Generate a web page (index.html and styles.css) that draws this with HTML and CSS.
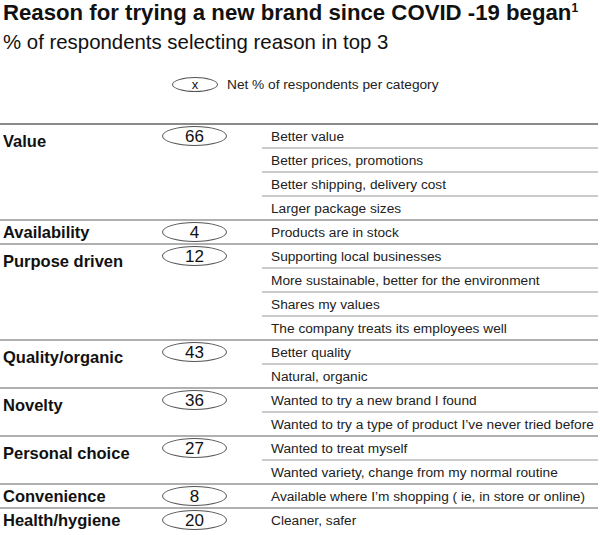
FILE: index.html
```html
<!DOCTYPE html>
<html>
<head>
<meta charset="utf-8">
<link rel="stylesheet" href="styles.css">
</head>
<body>
<div class="page">
  <h1 class="title">Reason for trying a new brand since COVID -19 began<span class="fn">1</span></h1>
  <p class="subtitle">% of respondents selecting reason in top 3</p>
  <div class="legend"><span class="oval oval-sm">x</span><span>Net % of respondents per category</span></div>
  <div class="table">
    <div class="group">
      <div class="cat">Value</div>
      <div class="num"><span class="oval">66</span></div>
      <ul class="items">
        <li>Better value</li>
        <li>Better prices, promotions</li>
        <li>Better shipping, delivery cost</li>
        <li>Larger package sizes</li>
      </ul>
    </div>
    <div class="group single">
      <div class="cat">Availability</div>
      <div class="num"><span class="oval">4</span></div>
      <ul class="items">
        <li>Products are in stock</li>
      </ul>
    </div>
    <div class="group">
      <div class="cat">Purpose driven</div>
      <div class="num"><span class="oval">12</span></div>
      <ul class="items">
        <li>Supporting local businesses</li>
        <li>More sustainable, better for the environment</li>
        <li>Shares my values</li>
        <li>The company treats its employees well</li>
      </ul>
    </div>
    <div class="group">
      <div class="cat">Quality/organic</div>
      <div class="num"><span class="oval">43</span></div>
      <ul class="items">
        <li>Better quality</li>
        <li>Natural, organic</li>
      </ul>
    </div>
    <div class="group">
      <div class="cat">Novelty</div>
      <div class="num"><span class="oval">36</span></div>
      <ul class="items">
        <li>Wanted to try a new brand I found</li>
        <li>Wanted to try a type of product I’ve never tried before</li>
      </ul>
    </div>
    <div class="group">
      <div class="cat">Personal choice</div>
      <div class="num"><span class="oval">27</span></div>
      <ul class="items">
        <li>Wanted to treat myself</li>
        <li>Wanted variety, change from my normal routine</li>
      </ul>
    </div>
    <div class="group single">
      <div class="cat">Convenience</div>
      <div class="num"><span class="oval">8</span></div>
      <ul class="items">
        <li>Available where I’m shopping ( ie, in store or online)</li>
      </ul>
    </div>
    <div class="group single">
      <div class="cat">Health/hygiene</div>
      <div class="num"><span class="oval">20</span></div>
      <ul class="items">
        <li>Cleaner, safer</li>
      </ul>
    </div>
  </div>
</div>
</body>
</html>
```
FILE: styles.css
```css
body {
  margin: 0;
  font-family: "Liberation Sans", Arial, sans-serif;
  color: #111;
  background: #fff;
}
.page {
  width: 598px;
}
.title {
  margin: 0;
  padding-left: 3px;
  font-size: 22.2px;
  line-height: 25px;
  font-weight: bold;
  white-space: nowrap;
}
.fn {
  font-size: 12px;
  vertical-align: 8px;
  line-height: 0;
}
.subtitle {
  margin: 5px 0 0;
  padding-left: 3px;
  font-size: 20.4px;
  line-height: 24px;
}
.legend {
  display: flex;
  align-items: center;
  gap: 9px;
  margin-top: 22px;
  padding-left: 172px;
  height: 16px;
  font-size: 13.7px;
  color: #222;
}
.oval {
  display: flex;
  align-items: center;
  justify-content: center;
  box-sizing: border-box;
  border: 1px solid #555;
  border-radius: 50%;
  color: #111;
  line-height: 1;
}
.oval-sm {
  width: 46px;
  height: 15px;
  font-size: 13px;
}
.table {
  margin-top: 31px;
  border-top: 2px solid #8a8a8a;
}
.group {
  display: grid;
  grid-template-columns: 162px 100px 1fr;
  border-top: 2px solid #b0b0b0;
}
.group:first-child {
  border-top: none;
}
.cat {
  padding: 6px 0 0 3px;
  font-size: 16.5px;
  line-height: 20px;
  font-weight: bold;
  white-space: nowrap;
}
.single .cat {
  padding-top: 1px;
}
.num {
  height: 22px;
  display: flex;
  align-items: center;
}
.num .oval {
  width: 65px;
  height: 20px;
  font-size: 17px;
}
.items {
  list-style: none;
  margin: 0;
  padding: 0;
}
.items li {
  height: 22px;
  line-height: 24px;
  padding-left: 9px;
  font-size: 13.7px;
  color: #222;
  white-space: nowrap;
  overflow: hidden;
}
.items li + li {
  border-top: 2px solid #cbcbcb;
}
```
